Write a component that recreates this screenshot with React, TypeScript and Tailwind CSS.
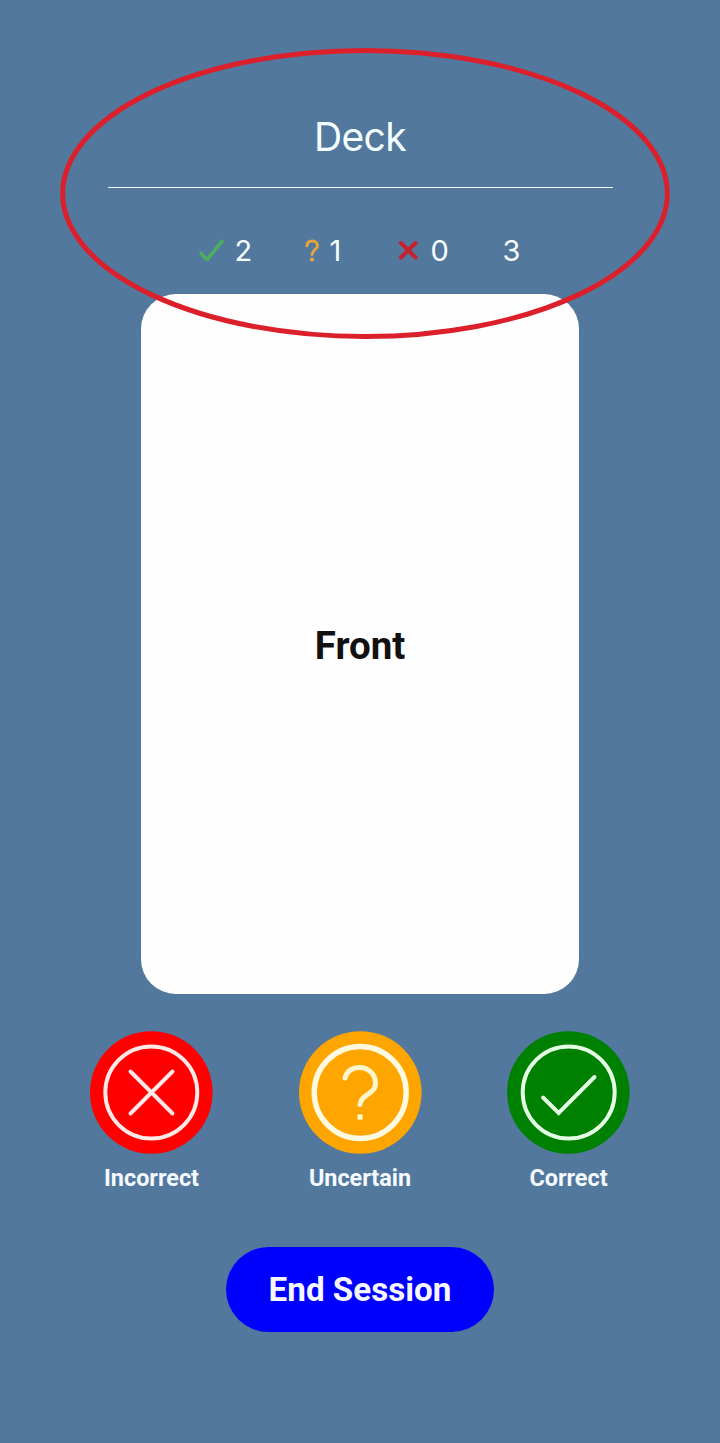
import type { ReactNode } from "react";

function Rating({ label, color, children }: { label: string; color: string; children: ReactNode }) {
  return (
    <button className="flex w-[123px] flex-col items-center">
      <svg viewBox="0 0 123 123" className="size-[123px]" fill="none" strokeLinecap="round">
        <circle cx="61.3" cy="61.5" r="61.3" fill={color} />
        {children}
      </svg>
      <span className="mt-[9px] whitespace-nowrap text-[23.4px] leading-[30px] font-bold text-[#f4faff]">{label}</span>
    </button>
  );
}

export default function App() {
  return (
    <main className="relative flex h-[1443px] w-[720px] flex-col items-center overflow-hidden bg-[#52789d] font-[Roboto,sans-serif]">
      <h1 className="mt-[112px] font-[Inter,sans-serif] text-[39px] leading-[50px] font-normal tracking-[-0.6px] text-[#f4ffff]">Deck</h1>
      <hr className="mt-[25px] h-px w-[505px] border-0 bg-[#f4f8fa]" />

      <div className="mt-[43px] flex h-[40px] w-[325px] items-center font-[Inter,sans-serif] text-[29px] leading-[40px] font-normal text-[#f8ffff]">
        <div className="flex w-[106px] items-center">
          <svg viewBox="0 0 26 24" className="h-6 w-[26px]" fill="none" stroke="#4caf60" strokeWidth="3.6" strokeLinecap="round" strokeLinejoin="round">
            <path d="M3 14.2 8.3 20.2Q9 20.8 9.7 20L24 2.2" />
          </svg>
          <span className="ml-[11px]">2</span>
        </div>
        <div className="flex w-[94px] items-center">
          <svg viewBox="0 0 16 24" className="h-6 w-4" fill="none" stroke="#e3a33d" strokeWidth="3" strokeLinecap="round">
            <path d="M3 6.8C3 3.7 5.1 2 8.2 2s5.3 2 5.3 4.7c0 3.9-5.5 4.2-5.5 8.8" />
            <circle cx="8" cy="20.5" r="2.1" fill="#e3a33d" stroke="none" />
          </svg>
          <span className="ml-[10px]">1</span>
        </div>
        <div className="flex w-[105px] items-center">
          <svg viewBox="0 0 22 24" className="h-6 w-[22px]" fill="none" stroke="#c7202e" strokeWidth="4" strokeLinecap="round">
            <path d="m3 4 14.5 14.5m0-14.5L3 18.500" />
          </svg>
          <span className="ml-[11px]">0</span>
        </div>
        <span>3</span>
      </div>

      <section className="mt-[22.5px] flex h-[700px] w-[437.5px] items-center justify-center rounded-[35px] bg-[#fefefe] pt-[5px]">
        <h2 className="text-[38.5px] leading-[48px] font-bold text-[#111111]">Front</h2>
      </section>

      <div className="mt-[37.5px] flex w-[540px] justify-between">
        <Rating label="Incorrect" color="#ff0000">
          <circle cx="61.3" cy="61.5" r="46" stroke="#ffe8e8" strokeWidth="3.9" />
          <path d="m40.5 40.5 42 42m0-42-42 42" stroke="#ffe8e8" strokeWidth="3.9" />
        </Rating>
        <Rating label="Uncertain" color="#ffa500">
          <circle cx="61.2" cy="61.5" r="46" stroke="#fff9df" strokeWidth="5.4" />
          <path d="M46 47c2-7 7.5-10.500 14.500-10.500 9 0 16 7 16 15.500 0 12-15 11-15.500 21.500" stroke="#fff5cb" strokeWidth="5" />
          <rect x="58.5" y="83.5" width="5.2" height="5.2" rx="0.7" fill="#fff5cb" />
        </Rating>
        <Rating label="Correct" color="#008000">
          <circle cx="61.7" cy="61.5" r="46" stroke="#e5ffe5" strokeWidth="3.9" />
          <path d="M36 66.5 51.7 82 87.5 46" stroke="#e5ffe5" strokeWidth="3.9" />
        </Rating>
      </div>

      <button className="mt-[54px] h-[85px] w-[267.5px] rounded-full bg-[#0000ff] text-[33.2px] leading-[42px] font-bold text-[#f7f7ff]">End Session</button>

      <svg viewBox="0 0 610 292" className="pointer-events-none absolute top-[48px] left-[60px] h-[292px] w-[610px]" fill="none">
        <ellipse cx="305" cy="145.5" rx="302.3" ry="143" stroke="#db202b" strokeWidth="5" />
      </svg>
    </main>
  );
}
